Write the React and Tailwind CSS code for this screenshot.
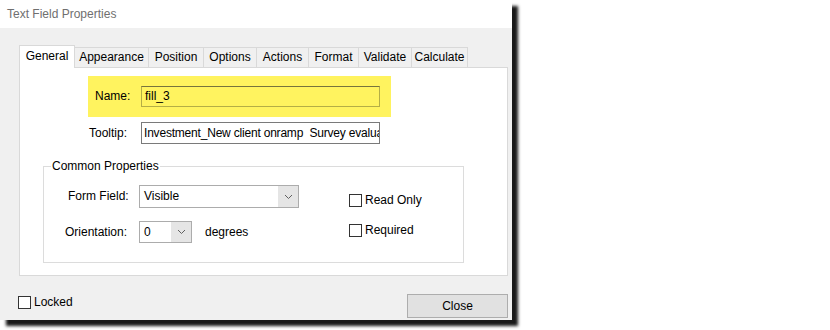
import clsx from 'clsx';

const tabs = [
    { key: 'general', label: 'General', w: 'w-[56px]' },
    { key: 'appearance', label: 'Appearance', w: 'w-[75px]' },
    { key: 'position', label: 'Position', w: 'w-[56px]' },
    { key: 'options', label: 'Options', w: 'w-[54px]' },
    { key: 'actions', label: 'Actions', w: 'w-[53px]' },
    { key: 'format', label: 'Format', w: 'w-[51px]' },
    { key: 'validate', label: 'Validate', w: 'w-[54px]' },
    { key: 'calculate', label: 'Calculate', w: 'w-[57px]' },
];

function Checkbox({ label, className }) {
    return (
        <label className={clsx('flex items-center gap-[3px]', className)}>
            <span className="block h-[13px] w-[13px] border border-[#333333] bg-white" />
            <span>{label}</span>
        </label>
    );
}

function Chevron() {
    return (
        <svg width="9" height="6" viewBox="0 0 9 6" fill="none">
            <polyline points="1,1 4.5,4.5 8,1" stroke="#606060" strokeWidth="1" />
        </svg>
    );
}

function Select({ value, box, field }) {
    // box: outer size classes, field: width of the white text part
    return (
        <div className={clsx('flex border border-[#acacac] bg-[#e5e5e5]', box)}>
            <div className={clsx('flex items-center bg-white pl-[4px]', field)}>{value}</div>
            <div className="flex flex-1 items-center justify-center">
                <Chevron />
            </div>
        </div>
    );
}

export default function App() {
    return (
        <div className="h-[330px] w-[830px] bg-white font-['Liberation_Sans',Arial,sans-serif] text-[12px] leading-[15px] text-black">
            <div className="w-[512px] shadow-[6px_6px_3px_rgba(0,0,0,0.9)]">
                {/* title bar */}
                <div className="flex h-[28px] items-center bg-white pl-[7px] text-[#6f6f6f]">
                    Text Field Properties
                </div>

                {/* body */}
                <div className="flex h-[292px] flex-col bg-[#f0f0f0] pl-[19px] pr-[4px] pt-[17px]">
                    {/* tabs */}
                    <div className="relative z-10 -mb-px flex items-end">
                        {tabs.map((t, i) => (
                            <div
                                key={t.key}
                                className={clsx(
                                    'flex items-center justify-center border border-[#d9d9d9]',
                                    t.w,
                                    i > 0 && '-ml-px',
                                    t.key === 'general'
                                        ? 'relative z-10 h-[23px] border-b-0 bg-white pb-[2px]'
                                        : 'h-[21px] bg-[#f0f0f0]'
                                )}
                            >
                                {t.label}
                            </div>
                        ))}
                    </div>

                    {/* panel */}
                    <div className="h-[209px] w-[489px] border border-[#d9d9d9] bg-white">
                        {/* Name (highlighted) */}
                        <div className="ml-[68px] mt-[8px] flex h-[41px] w-[303px] items-center bg-[#fff35f] pl-[7px]">
                            <span className="w-[46px]">Name:</span>
                            <div className="flex h-[21px] w-[239px] items-center border border-[#b5ae45] border-t-[#77743c] pl-[3px]">
                                fill_3
                            </div>
                        </div>

                        {/* Tooltip */}
                        <div className="ml-[69px] mt-[5px] flex h-[22px] items-center">
                            <span className="w-[52px]">Tooltip:</span>
                            <div className="flex h-[22px] w-[239px] items-center overflow-hidden whitespace-pre border border-[#7a7a7a] bg-white pl-[2px] tracking-[-0.2px]">
                                Investment_New client onramp  Survey evaluation
                            </div>
                        </div>

                        {/* Common Properties */}
                        <fieldset className="ml-[23px] mt-[15px] h-[104px] w-[421px] border border-[#dcdcdc]">
                            <legend className="ml-[7px] px-[1px]">Common Properties</legend>

                            <div className="mt-[11px] flex">
                                <div className="flex w-[305px] items-center">
                                    <span className="w-[95px] pl-[24px]">Form Field:</span>
                                    <Select value="Visible" box="h-[23px] w-[160px]" field="w-[138px]" />
                                </div>
                                <Checkbox label="Read Only" className="mt-[8px] self-start" />
                            </div>

                            <div className="mt-[13px] flex">
                                <div className="flex w-[305px] items-center">
                                    <span className="w-[95px] pl-[21px]">Orientation:</span>
                                    <Select value="0" box="h-[22px] w-[53px]" field="w-[31px]" />
                                    <span className="ml-[13px]">degrees</span>
                                </div>
                                <Checkbox label="Required" className="mt-[2px] self-start" />
                            </div>
                        </fieldset>
                    </div>

                    {/* bottom row */}
                    <div className="mt-[18px] flex h-[24px] w-[489px] items-start justify-between">
                        <Checkbox label="Locked" className="-ml-px mt-[1px]" />
                        <button
                            type="button"
                            className="h-[24px] w-[101px] border border-[#adadad] bg-[#e1e1e1]"
                        >
                            Close
                        </button>
                    </div>
                </div>
            </div>
        </div>
    );
}
